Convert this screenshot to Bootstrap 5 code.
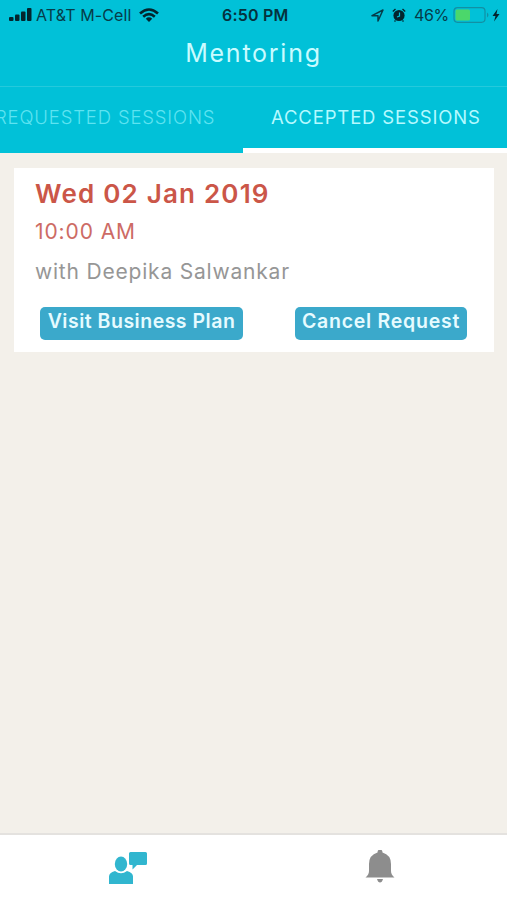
<!DOCTYPE html>
<html lang="en">
<head>
<meta charset="utf-8">
<meta name="viewport" content="width=device-width, initial-scale=1">
<title>Mentoring</title>
<link href="https://cdn.jsdelivr.net/npm/bootstrap@5.3.0/dist/css/bootstrap.min.css" rel="stylesheet">
<style>
body{font-family:Inter,"Liberation Sans",sans-serif;background:#f3f0ea;height:900px;overflow:hidden}
svg{display:block;flex:none}
.app-head{background:#01c1d8}
.status{height:30px;color:#063c49;font-size:16px;line-height:30px;padding:0 6px 0 8px}
.status .carrier{letter-spacing:.1px;margin-left:4px;margin-right:8px}
.clock{font-weight:600;letter-spacing:.2px;color:#05323d;left:222px;top:0}
.pct{margin-left:8px;margin-right:4px;letter-spacing:-.3px}
.app-title{height:56px;line-height:46px;font-size:25px;color:#c9fbff;letter-spacing:1.75px}
.tab-strip{height:67px;border-top:1px solid #25c9dc;font-size:18.5px;line-height:61px}
.tab-strip .nav-link{padding:0;border-radius:0;color:#5ee3f1;font-weight:300;white-space:nowrap;line-height:61px;letter-spacing:.85px}
.tab-strip .nav-link.active{color:#b5f9ff;font-weight:400;border-bottom:5px solid #fff;line-height:61px;letter-spacing:.85px}
.tab-a{width:243px}.tab-a .nav-link{margin-left:-5px}
.tab-b{width:264px}.tab-b .nav-link{padding-left:28px;height:66px}
.session{margin:15px 13px 0 14px;height:184px;padding:0 21px}
.s-date{font-size:26px;line-height:32px;margin-top:10px;font-weight:600;color:#cb5648;letter-spacing:1.2px}
.s-time{font-size:21px;line-height:26px;margin-top:9px;color:#cd6b65;letter-spacing:.9px}
.s-with{font-size:21px;line-height:26px;margin-top:14px;color:#969696;letter-spacing:.8px}
.actions{margin-top:22px;padding:0 6px 0 5px}
.btn-act{background:#3ba9cb;color:#e6fbff;font-size:19.5px;font-weight:600;line-height:26px;height:33px;padding:0 0 5px;border:0;border-radius:5px;white-space:nowrap}
.b-visit{width:203px;letter-spacing:.5px}.b-cancel{width:172px;letter-spacing:.75px}
.dock{height:67px;border-top:2px solid #e4e2df}
.dock a{padding-top:15px}
.dock .mentor{padding-left:2px}
</style>
</head>
<body class="d-flex flex-column">
<header class="app-head">
  <div class="status d-flex align-items-center position-relative">
    <svg width="24" height="14" viewBox="0 0 24 14" fill="#03252e"><rect x="1" y="9" width="4.500" height="4" rx="1"/><rect x="7" y="6.500" width="4.500" height="6.500" rx="1"/><rect x="13" y="3.500" width="4.500" height="9.500" rx="1"/><rect x="19" y="0" width="4.500" height="13" rx="1"/></svg>
    <span class="carrier">AT&amp;T M-Cell</span>
    <svg width="20" height="15" viewBox="0 0 20 15" fill="none" stroke="#03252e" stroke-width="2.600"><path d="M1 5.500Q10-2.500 19 5.500M4.200 8.700Q10 3.500 15.800 8.700"/><path d="M6.800 10.700Q10 8 13.200 10.700L10 14Z" fill="#03252e" stroke="none"/></svg>
    <span class="clock position-absolute">6:50 PM</span>
    <div class="d-flex align-items-center ms-auto">
      <svg width="13" height="13" viewBox="0 0 13 13" fill="none" stroke="#063c49" stroke-width="1.500" stroke-linejoin="round"><path d="M1 6.700 12 1 7 12V6.700Z"/></svg>
      <svg class="ms-2" width="14" height="14" viewBox="0 0 14 14"><circle cx="7" cy="7.500" r="5.600" fill="#03252e"/><path d="M.8 3.500 3.500 1M13.200 3.500 10.500 1M3.500 12.500 2.500 13.500M10.500 12.500l1 1" stroke="#03252e" stroke-width="1.400"/><path d="M7.500 4.500V8L5 9" fill="none" stroke="#01c1d8" stroke-width="1.200"/></svg>
      <span class="pct">46%</span>
      <svg class="batt" width="48" height="16" viewBox="0 0 48 16"><rect x="1" y=".700" width="31" height="14.600" rx="3.500" fill="none" stroke="#1290a4" stroke-width="1.200"/><rect x="2.500" y="2.500" width="14.500" height="11" rx="1.500" fill="#4bd76b"/><path d="M34 5.500q3 2.500 0 5Z" fill="#1290a4"/><path d="M44.500 2 39.500 9h3l-1.500 5.500L46.500 7h-3Z" fill="#03252e"/></svg>
    </div>
  </div>
  <h1 class="app-title text-center fw-normal m-0">Mentoring</h1>
  <ul class="nav flex-nowrap tab-strip">
    <li class="nav-item tab-a"><a class="nav-link" href="#">REQUESTED SESSIONS</a></li>
    <li class="nav-item tab-b"><a class="nav-link active" href="#">ACCEPTED SESSIONS</a></li>
  </ul>
</header>
<main class="flex-grow-1">
  <section class="session card border-0 rounded-0">
    <h2 class="s-date mb-0">Wed 02 Jan 2019</h2>
    <div class="s-time">10:00 AM</div>
    <div class="s-with">with Deepika Salwankar</div>
    <div class="actions d-flex justify-content-between">
      <button class="btn btn-act b-visit">Visit Business Plan</button>
      <button class="btn btn-act b-cancel">Cancel Request</button>
    </div>
  </section>
</main>
<nav class="dock bg-white d-flex">
  <a href="#" class="mentor w-50 d-flex justify-content-center" aria-label="Mentoring"><svg width="40" height="35" viewBox="0 0 40 35" fill="#31b6cf"><ellipse cx="13" cy="14" rx="6.200" ry="7.500"/><path d="M1 34v-7.500q0-4 6-5.500 6 4.500 12 0 6 1.500 6 5.500V34Z"/><path d="M22.500 2h15q1.500 0 1.500 1.500v10q0 1.500-1.500 1.500H29L24.500 19.500V15h-2Q21 15 21 13.500v-10Q21 2 22.500 2Z"/></svg></a>
  <a href="#" class="w-50 d-flex justify-content-center" aria-label="Notifications"><svg width="30" height="34" viewBox="0 0 30 34" fill="#8d8d8d"><path d="M15-.5q2.500 0 2.500 3Q26 5 26 14v7q0 3.500 3.500 6.500H.5Q4 24.500 4 21v-7q0-9 8.500-11.500 0-3 2.500-3Z"/><path d="M12 29h6q-1 3.500-3 3.500T12 29Z"/></svg></a>
</nav>
<script src="https://cdn.jsdelivr.net/npm/bootstrap@5.3.0/dist/js/bootstrap.bundle.min.js"></script>
</body>
</html>
